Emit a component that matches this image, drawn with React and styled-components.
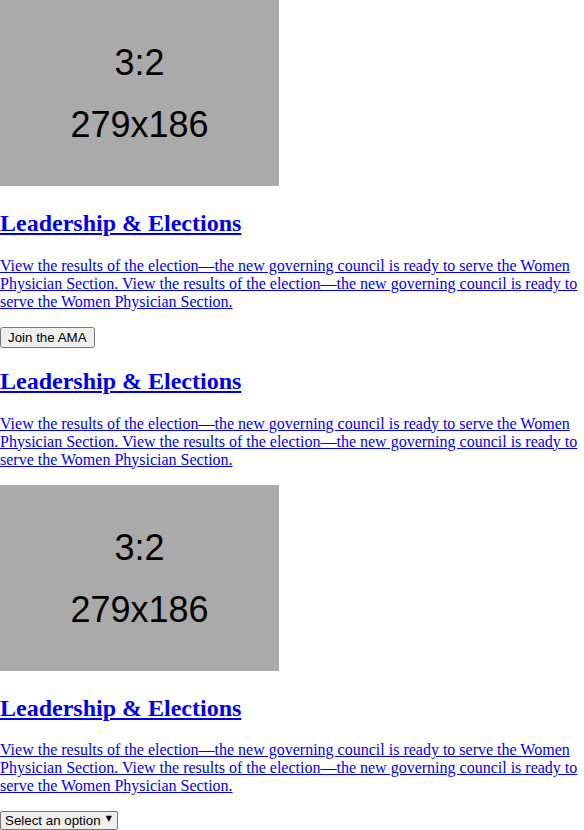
import React from 'react';
import styled, { createGlobalStyle } from 'styled-components';

const GlobalStyle = createGlobalStyle`
  body {
    margin: 0;
    font-family: "Liberation Serif", "Times New Roman", serif;
    background: #fff;
  }
`

const blurb =
  "View the results of the election\u2014the new governing council is ready to serve the Women Physician Section. View the results of the election\u2014the new governing council is ready to serve the Women Physician Section.";

const cards = [
  { image: true, action: "button" },
  { image: false },
  { image: true, action: "select" },
];

const Page = styled.div`
  width: 584px;
`
const Card = styled.div`
  display: block;
`
const Media = styled.div`
  font-size: 16px;
`
// inline like an <img>, so it keeps the descender gap below it
const Placeholder = styled.span`
  display: inline-block;
  overflow: hidden;
  width: 279px;
  height: 186px;
  background: #aaaaaa;
  vertical-align: baseline;
`
const PlaceholderInner = styled.span`
  height: 100%;
  box-sizing: border-box;
  padding-top: 2px;
  display: flex;
  flex-direction: column;
  align-items: center;
  justify-content: center;
  gap: 26px;
  font-family: "Liberation Sans", Arial, sans-serif;
  font-size: 36px;
  line-height: 1;
  color: #000;
`
const Title = styled.h2`
  font-size: 24px;
  font-weight: bold;
  margin: 19.92px 0;
  a {
    color: #0000ee;
    text-decoration: underline;
  }
`
const Text = styled.p`
  font-size: 16px;
  margin: 16px 0;
  a {
    color: #0000ee;
    text-decoration: underline;
  }
`
const Button = styled.button`
  font-family: "Liberation Sans", Arial, sans-serif;
  font-size: 13.33px;
`
const SelectWrap = styled.span`
  position: relative;
  display: inline-block;
`
const Select = styled.select`
  appearance: none;
  -webkit-appearance: none;
  font-family: "Liberation Sans", Arial, sans-serif;
  font-size: 13.33px;
  color: #000;
  background: #efefef;
  border: 1px solid #767676;
  border-radius: 2px;
  padding: 1px 16px 1px 4px;
  margin: 0;
`
const Arrow = styled.span`
  position: absolute;
  right: 6px;
  top: 3px;
  font-family: "DejaVu Sans", sans-serif;
  font-size: 8px;
  color: #000;
  pointer-events: none;
`

const App = () => {
  return (
    <Page>
      <GlobalStyle />
      {cards.map((card, index) => (
        <Card key={index}>
          {card.image && (
            <Media>
              <Placeholder>
                <PlaceholderInner>
                  <span>3:2</span>
                  <span>279x186</span>
                </PlaceholderInner>
              </Placeholder>
            </Media>
          )}
          <Title><a href="#">Leadership &amp; Elections</a></Title>
          <Text><a href="#">{blurb}</a></Text>
          {card.action === "button" && <Button>Join the AMA</Button>}
          {card.action === "select" && (
            <SelectWrap>
              <Select defaultValue="">
                <option value="">Select an option</option>
                <option value="1">Option 1</option>
              </Select>
              <Arrow>▼</Arrow>
            </SelectWrap>
          )}
        </Card>
      ))}
    </Page>
  )
}

export default App
